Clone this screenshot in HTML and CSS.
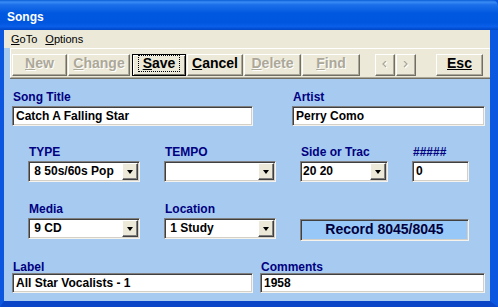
FILE: index.html
```html
<html>
    <head>
        <meta name="viewport" content="width=device-width, initial-scale=1.0">
        <link rel="stylesheet" href="styles.css">
    </head>
    <body>
        <div class="window">
            <div class="titlebar">Songs</div>
            <div class="frame">
                <div class="menubar">
                    <span><u>G</u>oTo</span>
                    <span><u>O</u>ptions</span>
                </div>

                <div class="toolbar">
                    <div class="btn off w-new"><u>N</u>ew</div>
                    <div class="btn off w-change"><u>C</u>hange</div>
                    <div class="btn focus w-save"><span class="dots"><u>S</u>ave</span></div>
                    <div class="btn w-cancel"><u>C</u>ancel</div>
                    <div class="btn off w-delete"><u>D</u>elete</div>
                    <div class="btn off w-find"><u>F</u>ind</div>
                    <div class="btn off w-nav first-nav">
                        <svg width="6" height="8" viewBox="0 0 6 8">
                            <polyline points="5,1 2,4 5,7" fill="none" stroke="#fff" stroke-width="1.3" />
                            <polyline points="4,0 1,3 4,6" fill="none" stroke="#aca899" stroke-width="1.3" />
                        </svg>
                    </div>
                    <div class="btn off w-nav">
                        <svg width="6" height="8" viewBox="0 0 6 8">
                            <polyline points="2,1 5,4 2,7" fill="none" stroke="#fff" stroke-width="1.3" />
                            <polyline points="1,0 4,3 1,6" fill="none" stroke="#aca899" stroke-width="1.3" />
                        </svg>
                    </div>
                    <div class="btn w-esc"><u>Esc</u></div>
                </div>

                <div class="row row1">
                    <div class="field w-title">
                        <div class="label">Song Title</div>
                        <div class="box">Catch A Falling Star</div>
                    </div>
                    <div class="field w-artist">
                        <div class="label">Artist</div>
                        <div class="box">Perry Como</div>
                    </div>
                </div>

                <div class="row row2">
                    <div class="field w-combo">
                        <div class="label">TYPE</div>
                        <div class="combo"><span class="val">&nbsp;8 50s/60s Pop</span><span class="drop"><span class="arrow"></span></span></div>
                    </div>
                    <div class="field w-combo">
                        <div class="label">TEMPO</div>
                        <div class="combo"><span class="val"></span><span class="drop"><span class="arrow"></span></span></div>
                    </div>
                    <div class="field w-side">
                        <div class="label">Side or Trac</div>
                        <div class="combo"><span class="val">20 20</span><span class="drop"><span class="arrow"></span></span></div>
                    </div>
                    <div class="field w-num">
                        <div class="label">#####</div>
                        <div class="box tall">0</div>
                    </div>
                </div>

                <div class="row row3">
                    <div class="field w-combo">
                        <div class="label">Media</div>
                        <div class="combo"><span class="val">&nbsp;9 CD</span><span class="drop"><span class="arrow"></span></span></div>
                    </div>
                    <div class="field w-combo">
                        <div class="label">Location</div>
                        <div class="combo"><span class="val">&nbsp;1 Study</span><span class="drop"><span class="arrow"></span></span></div>
                    </div>
                    <div class="record">Record 8045/8045</div>
                </div>

                <div class="row row4">
                    <div class="field w-label">
                        <div class="label">Label</div>
                        <div class="box">All Star Vocalists - 1</div>
                    </div>
                    <div class="field w-comments">
                        <div class="label">Comments</div>
                        <div class="box">1958</div>
                    </div>
                </div>
            </div>
        </div>
    </body>
</html>
```

FILE: styles.css
```css
*{
    box-sizing: border-box;
}
body{
    margin: 0;
    font-family: "Liberation Sans", Arial, sans-serif;
}
.window{
    width: 498px;
    height: 307px;
    display: flex;
    flex-direction: column;
    background: #0b57df;
}
.titlebar{
    height: 30px;
    padding: 4px 0 0 7px;
    line-height: 26px;
    font-size: 12px;
    font-weight: bold;
    color: #fff;
    background: linear-gradient(180deg, #0a5fd6 0%, #3a8cf5 7%, #1c6fe9 16%, #0058e0 45%, #0056df 75%, #0a5ee9 88%, #0047c7 100%);
    border-top-right-radius: 6px;
}
.frame{
    flex: 1;
    background: #a6caf0;
    border-left: 4px solid #0b57df;
    border-right: 8px solid #0b57df;
    border-bottom: 6px solid #0a45c8;
}
.menubar{
    height: 18px;
    line-height: 18px;
    padding-left: 7px;
    font-size: 11px;
    background: #ece9d8;
    display: flex;
    gap: 8px;
}
.toolbar{
    margin-left: 6px;
    height: 30px;
    padding: 5px 0 0 1px;
    background: #ece9d8;
    border-top: 1px solid #fff;
    border-left: 1px solid #fff;
    border-bottom: 1px solid #aca899;
    box-shadow: 0 1px 0 #716f64;
    display: flex;
}
.btn{
    height: 22px;
    padding-bottom: 3px;
    line-height: 17px;
    font-size: 14px;
    font-weight: bold;
    text-align: center;
    background: #ece9d8;
    border: 1px solid;
    border-color: #fff #716f64 #716f64 #fff;
    box-shadow: inset -1px -1px 0 #aca899;
    margin-right: 1px;
    display: flex;
    justify-content: center;
    align-items: center;
}
.btn.off{
    color: #aca899;
    text-shadow: 1px 1px 0 #fff;
}
.btn.focus{
    border: 1px solid #000;
    box-shadow: inset 1px 1px 0 #fff, inset -1px -1px 0 #716f64;
}
.dots{
    border: 1px dotted #000;
    padding: 0 4px;
    line-height: 15px;
}
.w-new{ width: 55px; }
.w-change{ width: 62px; margin-right: 2px; }
.w-save{ width: 54px; }
.w-cancel{ width: 56px; }
.w-delete{ width: 57px; }
.w-find{ width: 58px; margin-right: 15px; }
.w-nav{ width: 20px; padding-bottom: 0; }
.first-nav{ margin-right: 1px; }
.w-esc{ width: 47px; margin-left: 19px; }

.row{
    display: flex;
    padding-left: 8px;
}
.row1{ margin-top: 12px; gap: 39px; }
.row2{ margin-top: 19px; padding-left: 24px; gap: 24px; }
.row3{ margin-top: 20px; padding-left: 24px; gap: 24px; }
.row4{ margin-top: 21px; gap: 7px; }

.field{
    display: flex;
    flex-direction: column;
}
.label{
    height: 14px;
    line-height: 14px;
    padding-left: 1px;
    margin-bottom: 2px;
    font-size: 12px;
    font-weight: bold;
    color: #000080;
    white-space: nowrap;
}
.row4 .label{ margin-bottom: -1px; }
.box, .combo{
    height: 20px;
    background: #fff;
    border: 1px solid;
    border-color: #7f7f7f #f4f3ee #f4f3ee #7f7f7f;
    box-shadow: inset 1px 1px 0 #404040, inset -1px -1px 0 #d4d0c8;
    font-size: 12px;
    font-weight: bold;
    white-space: nowrap;
}
.box{
    padding-left: 3px;
    line-height: 18px;
}
.box.tall{ height: 21px; line-height: 19px; }
.combo{
    height: 21px;
    padding: 1px;
    display: flex;
}
.val{
    flex: 1;
    padding-left: 1px;
    line-height: 17px;
}
.drop{
    width: 16px;
    height: 17px;
    background: #ece9d8;
    border: 1px solid;
    border-color: #fff #404040 #404040 #fff;
    box-shadow: inset -1px -1px 0 #808080;
    display: flex;
    justify-content: center;
    align-items: center;
}
.arrow{
    width: 0;
    height: 0;
    border-left: 3px solid transparent;
    border-right: 3px solid transparent;
    border-top: 4px solid #000;
    margin-right: 1px;
}
.w-title{ width: 241px; }
.w-artist{ width: 193px; }
.w-combo{ width: 112px; }
.w-side{ width: 88px; }
.w-num{ width: 57px; }
.w-label{ width: 241px; }
.w-comments{ width: 225px; }

.record{
    width: 169px;
    height: 22px;
    margin-top: auto;
    margin-bottom: -2px;
    background: #98c8f8;
    border: 1px solid;
    border-color: #7f7f7f #f4f3ee #f4f3ee #7f7f7f;
    box-shadow: inset 1px 1px 0 #404040, inset -1px -1px 0 #d4d0c8;
    text-align: center;
    line-height: 19px;
    font-size: 14px;
    font-weight: bold;
    color: #00003c;
}
```
